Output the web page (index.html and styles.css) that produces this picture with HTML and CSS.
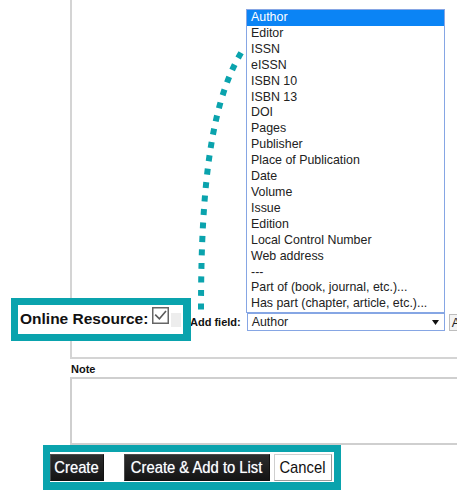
FILE: index.html
```html
<!DOCTYPE html>
<html lang="en">
<head>
<meta charset="utf-8">
<title>Add field</title>
<link rel="stylesheet" href="styles.css">
</head>
<body>
<div class="page">
  <div class="record">
    <div class="add-row">
      <span class="add-label">Add field:</span>
      <div class="select">
        <span class="select-value">Author</span>
        <svg class="caret" width="7" height="5" viewBox="0 0 7 5"><path d="M0 0H7L3.5 5Z" fill="#111"/></svg>
      </div>
      <button class="add-btn">Add</button>
    </div>
  </div>

  <div class="note">
    <div class="note-label">Note</div>
    <div class="note-box"></div>
  </div>

  <div class="callout actions">
    <button class="btn btn-dark btn-create"><span class="btn-text">Create</span></button>
    <button class="btn btn-dark btn-create-add"><span class="btn-text">Create &amp; Add to List</span></button>
    <button class="btn btn-light btn-cancel"><span class="btn-text">Cancel</span></button>
  </div>

  <ul class="listbox">
    <li class="selected">Author</li>
    <li>Editor</li>
    <li>ISSN</li>
    <li>eISSN</li>
    <li>ISBN 10</li>
    <li>ISBN 13</li>
    <li>DOI</li>
    <li>Pages</li>
    <li>Publisher</li>
    <li>Place of Publication</li>
    <li>Date</li>
    <li>Volume</li>
    <li>Issue</li>
    <li>Edition</li>
    <li>Local Control Number</li>
    <li>Web address</li>
    <li>---</li>
    <li>Part of (book, journal, etc.)...</li>
    <li>Has part (chapter, article, etc.)...</li>
  </ul>

  <div class="callout online">
    <span class="online-label">Online Resource:</span>
    <svg class="checkbox" width="17" height="17" viewBox="0 0 17 17">
      <rect x="0.75" y="0.75" width="15.5" height="15.5" fill="#fff" stroke="#666" stroke-width="1.5"/>
      <path d="M3.2 7.6L7.4 11.8L14 4" fill="none" stroke="#5a5a5a" stroke-width="1.6"/>
    </svg>
    <span class="underlay"></span>
  </div>

  <svg class="connector" width="457" height="497" viewBox="0 0 457 497">
    <path d="M201 309.5C201 180 212 98 244 48" fill="none" stroke="#0aa3ad" stroke-width="6" stroke-dasharray="6 7.5"/>
  </svg>
</div>
</body>
</html>
```

FILE: styles.css
```css
html, body {
  margin: 0;
  padding: 0;
  overflow: hidden;
  background: #fff;
}

body {
  font-family: "Liberation Sans", Arial, sans-serif;
  color: #222;
}

.page {
  position: relative;
  width: 457px;
  height: 497px;
  overflow: hidden;
}

/* record panel */
.record {
  margin-left: 70px;
  border-left: 2px solid #d4d4d4;
  border-bottom: 2px solid #d4d4d4;
  display: flex;
  flex-direction: column;
  justify-content: flex-end;
  padding-bottom: 26px;
  box-sizing: content-box;
  height: 331px;
}

.add-row {
  display: flex;
  align-items: center;
  padding-left: 118px;
  height: 18px;
}

.add-label {
  font-weight: bold;
  font-size: 11px;
  color: #111;
  margin-right: 6px;
  white-space: nowrap;
}

.select {
  flex: none;
  box-sizing: border-box;
  width: 198px;
  height: 18px;
  border: 1px solid #86a6e4;
  display: flex;
  align-items: center;
  justify-content: space-between;
  padding: 0 5px 0 4px;
  font-size: 12.4px;
  background: #fff;
}

.add-btn {
  flex: none;
  margin-left: 4px;
  height: 17px;
  box-sizing: border-box;
  border: 1px solid #bdbdbd;
  background: #f3f3f3;
  font-family: "Liberation Sans", Arial, sans-serif;
  font-size: 12.4px;
  padding: 0 2px;
  color: #222;
  align-self: flex-end;
}

/* note */
.note {
  margin-left: 70px;
  margin-right: -20px;
}

.note-label {
  font-weight: bold;
  font-size: 11px;
  line-height: 13px;
  margin-top: 4px;
  padding-left: 1px;
  color: #111;
}

.note-box {
  margin-top: 1px;
  height: 64px;
  border: 2px solid #cfcfcf;
}

/* callouts */
.callout {
  border: 7px solid #0aa3ad;
  background: #fff;
}

.actions {
  margin-left: 43px;
  width: 284px;
  border-bottom-width: 8px;
  display: flex;
  align-items: flex-start;
  padding-top: 2px;
  box-sizing: content-box;
  height: 28px;
}

.btn {
  font-family: "Liberation Sans", Arial, sans-serif;
  font-size: 17px;
  height: 27px;
  padding: 0;
  box-sizing: border-box;
  line-height: 25px;
  display: flex;
  justify-content: center;
  align-items: center;
  white-space: nowrap;
  overflow: visible;
}

.btn-text {
  display: inline-block;
  transform: scaleX(0.87);
  flex: none;
}

.btn-dark {
  background: linear-gradient(#2c2c2c, #141414);
  color: #fff;
  border: 1px solid #4a4a4a;
  border-right-color: #111;
  border-bottom-color: #111;
  text-shadow: 0 0 1px #9ab;
}

.btn-create {
  width: 54px;
  margin-right: 19.5px;
}

.btn-create-add {
  width: 146px;
  margin-right: 4px;
}

.btn-light {
  background: #fff;
  color: #111;
  border: 1px solid #cfcfcf;
  border-right-color: #9a9a9a;
  border-bottom-color: #9a9a9a;
}

.btn-cancel {
  width: 58px;
}

/* open dropdown list */
.listbox {
  position: absolute;
  left: 246px;
  top: 9px;
  width: 197px;
  margin: 0;
  padding: 0;
  list-style: none;
  border: 1px solid #86a6e4;
  background: #fff;
  font-size: 12.4px;
  line-height: 15.9px;
}

.listbox li {
  padding-left: 4px;
  white-space: nowrap;
  color: #222;
}

.listbox li.selected {
  background: #0b84f5;
  color: #fff;
}

/* online resource callout */
.online {
  position: absolute;
  left: 11px;
  top: 298px;
  width: 165px;
  height: 29px;
  border-right-width: 8px;
  display: flex;
  align-items: flex-start;
}

.online-label {
  font-weight: bold;
  font-size: 15.5px;
  line-height: 18px;
  margin-top: 4.6px;
  margin-left: 2px;
  color: #111;
  white-space: nowrap;
}

.checkbox {
  flex: none;
  margin-left: 4px;
  margin-top: 2px;
}

.underlay {
  flex: none;
  width: 10px;
  height: 14px;
  margin-left: 2px;
  margin-top: 8px;
  background: #ededed;
}

.connector {
  position: absolute;
  left: 0;
  top: 0;
  pointer-events: none;
}
```
